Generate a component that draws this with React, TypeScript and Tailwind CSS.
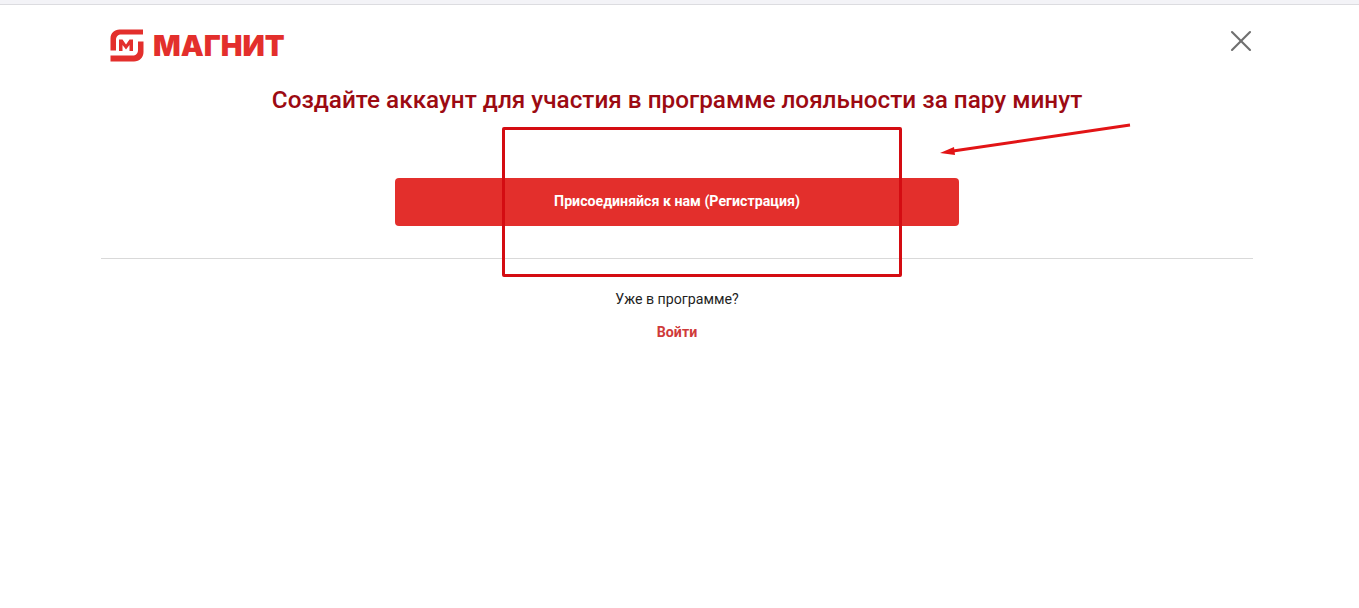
import { X } from 'lucide-react';

function LogoMark() {
  return (
    <svg width="34" height="33" viewBox="0 0 34 33" className="shrink-0" fill="#e32f2c">
      {/* outer bracket pieces */}
      <path d="M33 0.5V5.5H11.5C8 5.5 6 7.5 6 11V21.5H0.5V9.5C0.5 4 4.5 0.5 9.5 0.5Z" />
      <path d="M0.5 26.5H22.5C26 26.5 28 24.5 28 21V12.5H33.5V23C33.5 28.5 29.5 32.5 24 32.5H0.5Z" />
      {/* inner M */}
      <path d="M9 22V10.5H12.5L16 15.5L19.5 10.5H23V22H19.5V16L16 20.5L12.5 16V22Z" />
    </svg>
  );
}

export default function App() {
  return (
    <div className="relative min-h-[608px] bg-white font-['Roboto',sans-serif] overflow-hidden">
      {/* browser strip on top */}
      <div className="h-[5px] bg-[#f3f3f7] border-b border-[#dcdce0]" />

      <div className="w-[1152px] ml-[101px]">
        {/* Header */}
        <div className="flex items-start justify-between h-[78px] pl-[9px] pt-[24px]">
          <div className="flex items-center gap-[9px]">
            <LogoMark />
            <span className="font-['Inter',sans-serif] font-black text-[29px] leading-[33px] text-[#e32f2c]">МАГНИТ</span>
          </div>
          <X className="w-[36px] h-[36px] mt-[-6px] mr-[-6px] text-[#6f6f6f]" strokeWidth={1.4} />
        </div>

        <h1 className="text-center text-[24.3px] leading-[34px] font-medium text-[#9c0a12]">
          Создайте аккаунт для участия в программе лояльности за пару минут
        </h1>

        <div className="flex justify-center mt-[61px]">
          <button className="w-[564px] h-[48px] rounded-[4px] bg-[#e32f2c] text-white text-[14.2px] font-bold">
            Присоединяйся к нам (Регистрация)
          </button>
        </div>

        <div className="mt-[32px] border-t border-[#d9d9d9]" />

        <p className="mt-[30px] text-center text-[14.2px] leading-[20px] text-[#1f1f1f]">Уже в программе?</p>
        <p className="mt-[13px] text-center text-[14.2px] leading-[20px] font-bold text-[#cf3a3a]">Войти</p>
      </div>

      {/* annotation drawn over the screenshot */}
      <div className="absolute left-[502px] top-[127px] w-[400px] h-[150px] border-[3px] border-[#d40c12] rounded-[2px] pointer-events-none" />
      <svg className="absolute left-[935px] top-[120px] pointer-events-none" width="200" height="40" viewBox="0 0 200 40">
        <line x1="195" y1="5" x2="18" y2="31" stroke="#e21416" strokeWidth="3" />
        <path d="M5 33L19 27L20 35Z" fill="#e21416" />
      </svg>
    </div>
  );
}
